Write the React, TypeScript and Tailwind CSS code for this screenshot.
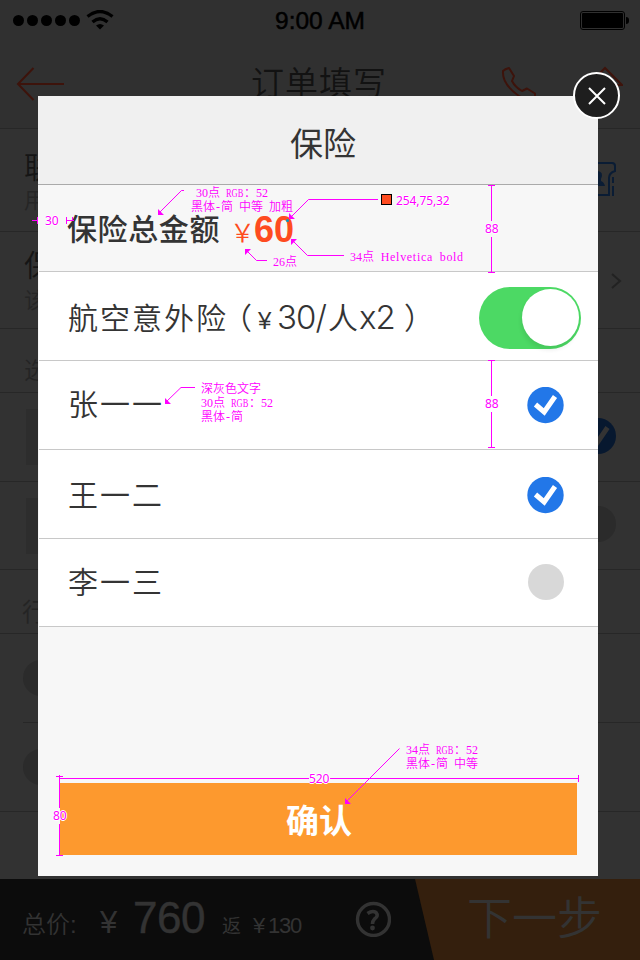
import type { ReactNode } from "react";

const cjk = "font-['Liberation_Sans','Noto_Sans_CJK_SC',sans-serif]";

// A design note on a 12px grid: full-width glyphs take 12px, Latin glyphs 6px.
function Note({ text, className }: { text: string; className: string }) {
  const runs = text.match(/RGB|[\x00-\x7f]+?(?=RGB|[^\x00-\x7f]|$)|[^\x00-\x7f]+/g) ?? [];
  return (
    <div className={`absolute flex h-[12px] items-center whitespace-pre text-[12px] leading-[12px] text-[#f0f] ${className}`}>
      {runs.map((run, i) => {
        if (run === "RGB") {
          return (
            <span key={i} className="w-[18px]">
              <span className="inline-block origin-left scale-x-[0.7] font-['Liberation_Serif',serif]">{run}</span>
            </span>
          );
        }
        if (run === "-") {
          return <span key={i} className="w-[6px] text-center font-['Liberation_Serif',serif]">{run}</span>;
        }
        if (run.charCodeAt(0) < 128) {
          return (
            <span key={i} className={`font-['Liberation_Serif',serif] [word-spacing:3px] ${run.length > 5 ? "tracking-[0.7px]" : ""}`}>{run}</span>
          );
        }
        return <span key={i} className="relative -top-px font-['Noto_Sans_CJK_SC',sans-serif] font-[350]">{run}</span>;
      })}
    </div>
  );
}

function Measure({ children, className }: { children: string; className: string }) {
  return (
    <span className={`absolute font-['Noto_Sans',sans-serif] text-[12px] leading-[14px] tracking-[-0.1px] text-[#f0f] [text-shadow:1px_0_#fff,-1px_0_#fff,0_1px_#fff,0_-1px_#fff] ${className}`}>
      {children}
    </span>
  );
}

function Check() {
  return (
    <svg viewBox="0 0 37 37" className="h-[37px] w-[37px]">
      <circle cx="18.5" cy="18" r="18.2" fill="#2277e8" />
      <path d="M8.500 17.500 L17.200 25 L28 9.500" fill="none" stroke="#fff" strokeWidth="5" />
    </svg>
  );
}

function Person({ name, className, children }: { name: string; className: string; children: ReactNode }) {
  return (
    <div className={`ml-px flex items-center justify-between border-b border-[#c8c8c8] bg-white pl-[29px] pr-[34px] ${className}`}>
      <span className="text-[30px] font-[350] leading-none tracking-[2px]">{name}</span>
      {children}
    </div>
  );
}

function Backdrop() {
  return (
    <div className="flex h-[960px] w-[640px] flex-col bg-[#323232]">
      <header className="flex h-[129px] shrink-0 flex-col border-b border-[#272727] bg-[#303030]">
        <div className="flex h-10 items-center justify-between pl-[13px] pr-[11px] text-black">
          <div className="flex w-[236px] items-center gap-[3px]">
            {[0, 1, 2, 3, 4].map((n) => (
              <i key={n} className="h-[11px] w-[11px] rounded-full bg-black" />
            ))}
            <svg viewBox="0 0 28 20" className="ml-[3px] h-5 w-7">
              <path d="M1.500 6.500 Q14 -3.500 26.500 6.500 M6.500 12 Q14 5.500 21.500 12" fill="none" stroke="#000" strokeWidth="3.300" />
              <path d="M10 15.500 Q14 12.500 18 15.500 L14 19.500 Z" />
            </svg>
          </div>
          <span className="mt-[3px] whitespace-nowrap font-['Liberation_Sans',sans-serif] text-[24.5px] leading-none [-webkit-text-stroke:0.5px_#000]">9:00 AM</span>
          <div className="flex w-[238px] items-center justify-end">
            <div className="h-[19px] w-[45px] rounded-[3px] border border-black p-px">
              <div className="h-full rounded-[1px] bg-black" />
            </div>
            <i className="ml-px h-[7px] w-[3px] rounded-r-full bg-black" />
          </div>
        </div>
        <div className="flex h-[88px] items-center pl-4 pr-[17px]">
          <svg viewBox="0 0 48 34" className="h-[34px] w-[235px]" preserveAspectRatio="xMinYMid meet" fill="none" stroke="#3d130b" strokeWidth="2">
            <path d="M17.500 1 L2 17 L17.500 33 M2 17 H48" />
          </svg>
          <h1 className="mb-[2px] whitespace-nowrap text-[33px] font-[350] leading-none tracking-[1px] text-[#121212]">订单填写</h1>
          <div className="ml-auto flex items-center gap-[50px]">
            <svg viewBox="0 0 36 36" className="h-9 w-9" fill="none" stroke="#3d130b" strokeWidth="2">
              <path d="M2 5 Q4 3 8 2 L13 10 L11 15 Q14 21 21 25 L26 22.500 L34 27.500 V31 Q28 36 18 30 Q1 18 2 5 Z" strokeLinejoin="round" />
            </svg>
            <svg viewBox="0 0 36 36" className="h-9 w-9" fill="none" stroke="#3d130b" strokeWidth="2">
              <path d="M1 19 L18 2 L35 19 H30 V34 H6 V19 Z" />
            </svg>
          </div>
        </div>
      </header>
      <section className="flex h-[103px] shrink-0 items-center justify-between border-b border-[#272727] pl-6 pr-6 font-[350]">
        <div className="pt-[3px]">
          <p className="text-[30px] leading-[38px] text-[#151515]">联系人</p>
          <p className="text-[22px] leading-[28px] text-[#252525]">用于接收短信</p>
        </div>
        <svg viewBox="0 0 40 36" className="mb-[2px] h-9 w-10" fill="none" stroke="#0a1c34" strokeWidth="2">
          <path d="M2 2 H36 Q39 2 39 5 V10 Q33 12 33 17 V34 H2 Z M37 16 V22 M37 25 V35" />
          <path d="M14 25 Q15 21 20 20 V18 Q17 10 22 10 Q28 11 25 18 V20 Q28 21 29 25 Z" fill="#0a1c34" stroke="none" />
        </svg>
      </section>
      <section className="flex h-[97px] shrink-0 items-center justify-between border-b border-[#272727] pl-6 pr-[18px] font-[350]">
        <div className="pt-[3px]">
          <p className="text-[30px] leading-[38px] text-[#151515]">保险</p>
          <p className="text-[22px] leading-[32px] text-[#252525]">该保险</p>
        </div>
        <svg viewBox="0 0 12 18" className="mt-[2px] h-[18px] w-3" fill="none" stroke="#222" strokeWidth="2">
          <path d="M2 2 L10 9 L2 16" />
        </svg>
      </section>
      <div className="flex h-16 shrink-0 items-end border-b border-[#272727] pb-2 pl-6 text-[24px] font-[350] leading-[26px] text-[#242424]">选择</div>
      <div className="flex h-[89px] shrink-0 items-center justify-between border-b border-[#272727] pl-[26px] pr-6">
        <div className="h-14 w-14 bg-[#2d2d2d]" />
        <svg viewBox="0 0 36 36" className="mb-[2px] h-9 w-9">
          <circle cx="18" cy="18" r="18" fill="#07182f" />
          <path d="M8.500 17.500 L17 25 L27.500 9.500" fill="none" stroke="#333" strokeWidth="5" />
        </svg>
      </div>
      <div className="flex h-[88px] shrink-0 items-center justify-between border-b border-[#272727] pl-[26px] pr-6">
        <div className="h-14 w-14 bg-[#2d2d2d]" />
        <i className="mb-[3px] h-9 w-9 rounded-full bg-[#2b2b2b]" />
      </div>
      <div className="flex h-16 shrink-0 items-end border-b border-[#272727] pb-[7px] pl-[22px] text-[25px] font-[350] leading-[27px] text-[#242424]">行程</div>
      <div className="ml-[23px] flex h-[89px] shrink-0 items-center border-b border-[#272727]">
        <i className="h-9 w-9 rounded-full bg-[#2b2b2b]" />
      </div>
      <div className="flex h-[89px] shrink-0 items-center border-b border-[#272727] pl-[23px]">
        <i className="h-9 w-9 rounded-full bg-[#2b2b2b]" />
      </div>
      <footer className="mt-auto flex h-[81px] shrink-0 bg-[#0c0c0c] text-[#333]">
        <div className="flex flex-1 items-baseline whitespace-nowrap pl-[22px] pt-[14px] leading-[50px]">
          <span className="w-[78px] text-[24px] font-[350]">总价:</span>
          <span className="w-[33px] text-[31px] leading-[50px]">¥</span>
          <span className="w-[89px] text-[44px] tracking-[-0.5px] [-webkit-text-stroke:0.5px_#333]">760</span>
          <span className="w-[31px] text-[19px]">返</span>
          <span className="w-[15px] text-[22px]">¥</span>
          <span className="text-[22px] tracking-[-1.2px]">130</span>
        </div>
        <svg viewBox="0 0 36 36" className="mr-6 mt-[22px] h-9 w-9" fill="none" stroke="#333">
          <circle cx="18.500" cy="18.500" r="16" strokeWidth="3.400" />
          <path d="M12.500 12.500 Q17.500 9 21 11.500 Q24 15 19.500 18 Q17.500 20 17.500 23" strokeWidth="3.600" />
          <circle cx="17.500" cy="27" r="2.400" fill="#333" stroke="none" />
        </svg>
        <div className="flex w-[225px] items-center bg-[#341f0d] pl-[52px] text-[45px] font-[350] leading-none [clip-path:polygon(0_0,100%_0,100%_100%,19px_100%)]">下一步</div>
      </footer>
    </div>
  );
}

function InsuranceModal() {
  return (
    <div className="absolute left-[38px] top-[96px] flex h-[780px] w-[560px] flex-col bg-[#f7f7f7] text-[#343434]">
      <div className="flex h-[89px] items-center justify-center border-b border-[#aaa] bg-[#f0f0f0] pl-[10px] pt-[8px] text-[33px] leading-none">
        <h2>保险</h2>
      </div>
      <div className="ml-px flex h-[87px] items-center border-b border-[#c8c8c8] pl-[28px] pt-[4px]">
        <span className="w-[163px] text-[30px] font-medium leading-none tracking-[0.6px]">保险总金额</span>
        <span className="w-[24px] pt-[2px] font-['Noto_Sans_CJK_SC',sans-serif] text-[25px] font-[350] leading-none text-[#fe4b20]">￥</span>
        <strong className="text-[36px] leading-none text-[#fe4b20]">60</strong>
      </div>
      <div className="ml-px flex h-[89px] items-center border-b border-[#c8c8c8] bg-white pl-[29px] pr-[17px] pt-[3px] font-[350]">
        <div className="flex flex-1 items-baseline whitespace-nowrap text-[30px] leading-none">
          <span className="w-[154px] tracking-[2px]">航空意外险</span>
          <span className="w-[36px]">（</span>
          <span className="w-[19px] text-[24px]">¥</span>
          <span className="w-[51px] font-['Inter','Liberation_Sans',sans-serif] text-[33px] font-light tracking-[-1px]">30/</span>
          <span className="w-[31px]">人</span>
          <span className="w-[45px] font-['Inter','Liberation_Sans',sans-serif] text-[33px] font-light tracking-[-1px]">x2</span>
          <span className="w-[20px]">）</span>
        </div>
        <div className="flex h-[62px] w-[102px] items-center justify-end rounded-full bg-[#4cd964] pb-px pr-[2px]">
          <div className="h-[57px] w-[57px] rounded-full bg-white shadow-[-1px_4px_4px_rgba(0,0,0,0.08)]" />
        </div>
      </div>
      <Person name="张一一" className="h-[89px]"><Check /></Person>
      <Person name="王一二" className="h-[89px] pt-[3px]"><Check /></Person>
      <Person name="李一三" className="h-[88px]"><i className="mb-px h-9 w-9 rounded-full bg-[#d8d8d8]" /></Person>
      <button className="ml-[22px] mt-auto mb-[21px] h-[72px] w-[517px] bg-[#fd992e] pl-px pt-[4px] text-[33px] font-bold leading-none text-white">确认</button>
    </div>
  );
}

function Annotations() {
  return (
    <div className="pointer-events-none absolute inset-0">
      <svg viewBox="0 0 640 960" className="absolute inset-0 h-[960px] w-[640px]" fill="none" stroke="#f0f">
        <path d="M32 220.500H38 M37.500 217V224 M66.500 217V224 M66 220.500H74 M72.500 217V221" />
        <path d="M184 190.500H181.500L159 213 M290 218L308.500 199.500H378 M292 240L307.500 255.500H344 M246 250L256.500 260.500H267 M195 387.500H181L166 402 M399.500 748.500L346 802" />
        <path d="M158 215V209L164 215Z M289 219V213L295 219Z M291 239H297L291 245Z M245 249H251L245 255Z M165 404V398L171 404Z M345 804V798L351 804Z" fill="#f0f" stroke="none" />
        <path d="M488 185.500H495 M491.500 185V221 M491.500 237V272 M488 272.500H495 M488 360.500H495 M491.500 360V396 M491.500 412V447 M488 447.500H495" />
        <path d="M56 776.500H63 M59.500 775V808 M59.500 824V855 M56 855.500H63 M60 778.500H309 M330 778.500H578 M578.500 775V782" />
        <rect x="381.500" y="194.500" width="10" height="10" fill="#fe4b20" stroke="#000" />
        <circle cx="287.500" cy="220.500" r="1.500" fill="#09c" stroke="none" />
      </svg>
      <Note text="30点 RGB：52" className="left-[196px] top-[187px]" />
      <Note text="黑体-简 中等 加粗" className="left-[191px] top-[201px]" />
      <Note text="26点" className="left-[273px] top-[256px]" />
      <Note text="34点 Helvetica bold" className="left-[350px] top-[251px]" />
      <Note text="深灰色文字" className="left-[201px] top-[383px]" />
      <Note text="30点 RGB：52" className="left-[201px] top-[397px]" />
      <Note text="黑体-简" className="left-[201px] top-[411px]" />
      <Note text="34点 RGB：52" className="left-[406px] top-[744px]" />
      <Note text="黑体-简 中等" className="left-[406px] top-[758px]" />
      <Measure className="left-[45px] top-[214px]">30</Measure>
      <Measure className="left-[396px] top-[194px]">254,75,32</Measure>
      <Measure className="left-[485px] top-[222px]">88</Measure>
      <Measure className="left-[485px] top-[397px]">88</Measure>
      <Measure className="left-[309px] top-[772px]">520</Measure>
      <Measure className="left-[53px] top-[809px]">80</Measure>
    </div>
  );
}

export default function App() {
  return (
    <main className={`relative h-[960px] w-[640px] overflow-hidden ${cjk}`}>
      <Backdrop />
      <InsuranceModal />
      <Annotations />
      <button aria-label="关闭" className="absolute left-[573px] top-[72px] flex h-[47px] w-[47px] items-center justify-center rounded-full border-2 border-white bg-[#1e1e1e]">
        <svg viewBox="0 0 18 18" className="h-[18px] w-[18px]" stroke="#fff" strokeWidth="2">
          <path d="M1 1 L17 17 M17 1 L1 17" />
        </svg>
      </button>
    </main>
  );
}
